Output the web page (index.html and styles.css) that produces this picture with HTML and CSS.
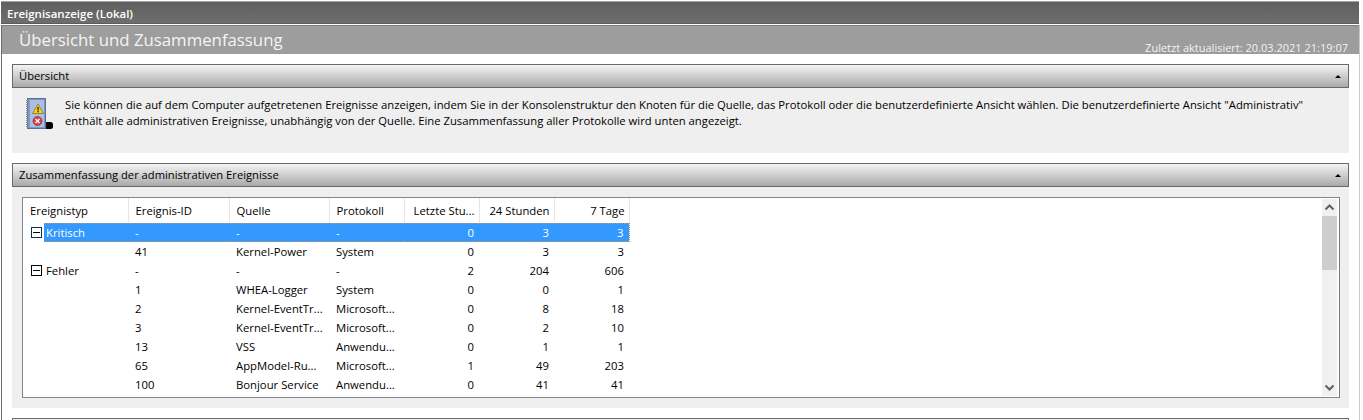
FILE: index.html
```html
<!DOCTYPE html>
<html lang="de">
<head>
<meta charset="utf-8">
<title>Ereignisanzeige</title>
<link rel="stylesheet" href="styles.css">
</head>
<body>
<div class="app">
  <div class="titlebar">Ereignisanzeige (Lokal)</div>
  <div class="window">
    <div class="pagehead">
      <h1 class="pagetitle">Übersicht und Zusammenfassung</h1>
      <span class="updated">Zuletzt aktualisiert: 20.03.2021 21:19:07</span>
    </div>
    <div class="content">
      <section class="section">
        <div class="sechead"><span>Übersicht</span><i class="caret"></i></div>
        <div class="overview">
          <svg class="bookicon" width="32" height="34" viewBox="0 0 32 34">
            <rect x="21" y="26" width="5" height="7" fill="#111"/>
            <rect x="23" y="26" width="6" height="7" rx="2.500" fill="#000"/>
            <rect x="3.500" y="2.500" width="18" height="30" fill="#7f98c2" stroke="#5d6f93"/>
            <rect x="6" y="4" width="14" height="27" fill="#a9c0e4"/>
            <path d="M3 4v28" stroke="#8c8c8c" stroke-dasharray="1 1" stroke-width="2"/>
            <path d="M14 8l5.500 9.500h-11z" fill="#f5cf1d" stroke="#8e7510" stroke-width=".8"/>
            <rect x="13.400" y="11" width="1.300" height="3.500" fill="#222"/>
            <rect x="13.400" y="15" width="1.300" height="1.300" fill="#222"/>
            <circle cx="13.500" cy="25" r="4.500" fill="#d9424a" stroke="#8d2a33" stroke-width=".7"/>
            <path d="M11.500 23l4 4M15.500 23l-4 4" stroke="#fff" stroke-width="1.300"/>
          </svg>
          <p class="overtext">Sie können die auf dem Computer aufgetretenen Ereignisse anzeigen, indem Sie in der Konsolenstruktur den Knoten für die Quelle, das Protokoll oder die benutzerdefinierte Ansicht wählen. Die benutzerdefinierte Ansicht "Administrativ"<br>enthält alle administrativen Ereignisse, unabhängig von der Quelle. Eine Zusammenfassung aller Protokolle wird unten angezeigt.</p>
        </div>
      </section>
      <section class="section">
        <div class="sechead"><span>Zusammenfassung der administrativen Ereignisse</span><i class="caret"></i></div>
        <div class="summary">
          <div class="listbox">
            <table class="grid">
              <colgroup>
                <col class="c1"><col class="c2"><col class="c3"><col class="c4"><col class="c5"><col class="c6"><col class="c7">
              </colgroup>
              <thead>
                <tr><th>Ereignistyp</th><th>Ereignis-ID</th><th>Quelle</th><th>Protokoll</th><th class="num">Letzte Stu...</th><th class="num">24 Stunden</th><th class="num">7 Tage</th></tr>
              </thead>
              <tbody>
                <tr class="selected"><td class="tree"><span class="box"></span><span class="label">Kritisch</span></td><td>-</td><td>-</td><td>-</td><td class="num">0</td><td class="num">3</td><td class="num last">3</td></tr>
                <tr><td></td><td>41</td><td>Kernel-Power</td><td>System</td><td class="num">0</td><td class="num">3</td><td class="num">3</td></tr>
                <tr><td class="tree"><span class="box"></span><span class="label">Fehler</span></td><td>-</td><td>-</td><td>-</td><td class="num">2</td><td class="num">204</td><td class="num">606</td></tr>
                <tr><td></td><td>1</td><td>WHEA-Logger</td><td>System</td><td class="num">0</td><td class="num">0</td><td class="num">1</td></tr>
                <tr><td></td><td>2</td><td>Kernel-EventTr...</td><td>Microsoft...</td><td class="num">0</td><td class="num">8</td><td class="num">18</td></tr>
                <tr><td></td><td>3</td><td>Kernel-EventTr...</td><td>Microsoft...</td><td class="num">0</td><td class="num">2</td><td class="num">10</td></tr>
                <tr><td></td><td>13</td><td>VSS</td><td>Anwendu...</td><td class="num">0</td><td class="num">1</td><td class="num">1</td></tr>
                <tr><td></td><td>65</td><td>AppModel-Ru...</td><td>Microsoft...</td><td class="num">1</td><td class="num">49</td><td class="num">203</td></tr>
                <tr><td></td><td>100</td><td>Bonjour Service</td><td>Anwendu...</td><td class="num">0</td><td class="num">41</td><td class="num">41</td></tr>
              </tbody>
            </table>
            <div class="scrollbar">
              <svg class="arrow" width="15" height="17" viewBox="0 0 15 17"><path d="M3.500 10.500l4-4 4 4" fill="none" stroke="#606060" stroke-width="2"/></svg>
              <div class="thumb"></div>
              <div class="track"></div>
              <svg class="arrow" width="15" height="17" viewBox="0 0 15 17"><path d="M3.500 6.500l4 4 4-4" fill="none" stroke="#606060" stroke-width="2"/></svg>
            </div>
          </div>
        </div>
      </section>
      <section class="section">
        <div class="sechead"></div>
      </section>
    </div>
  </div>
</div>
</body>
</html>
```
FILE: styles.css
```css
* { box-sizing: border-box; }
html, body { margin: 0; height: 420px; overflow: hidden; background: #fff; }
body { font-family: "Open Sans", "Noto Sans", sans-serif; font-size: 11.300px; color: #000; }
.app { width: 1363px; height: 420px; padding: 1px 0 0 1px; overflow: hidden; }
.titlebar {
  width: 1358px;
  height: 23px;
  background: linear-gradient(#5f5f5f, #6e6e6e);
  border-top: 1px solid #a0a0a0;
  border-bottom: 1px solid #5c5c5c;
  color: #fff;
  font-weight: 600;
  font-size: 11.500px;
  line-height: 23px;
  padding-left: 6px;
}
.window {
  margin-top: 1px;
  width: 1359px;
  height: 395px;
  overflow: hidden;
  border-left: 1px solid #6d6d6d;
  border-right: 1px solid #c9c9c9;
}
.pagehead {
  height: 29px;
  background: #9d9d9d;
  border-top: 1px solid #7d7d7d;
  display: flex;
  justify-content: space-between;
  color: #fff;
  padding: 0 11px 0 17px;
}
.pagetitle { margin: 0; font-size: 16.800px; font-weight: 400; line-height: 28px; color: #f4f4f4; }
.updated { font-size: 11px; line-height: 15px; padding-top: 14px; color: #f2f2f2; }
.content { padding: 10px 10px 0 10px; display: flex; flex-direction: column; gap: 10px; }
.section { width: 1337px; }
.sechead {
  height: 24px;
  border: 1px solid #696969;
  background: linear-gradient(#f4f4f4, #a9a9a9);
  display: flex;
  align-items: center;
  justify-content: space-between;
  padding: 0 6px 2px;
  font-size: 11.200px;
}
.caret {
  width: 0; height: 0;
  border-left: 3px solid transparent;
  border-right: 3px solid transparent;
  border-bottom: 3px solid #000;
  margin: 2px 1px 0 0;
}
.overview { height: 65px; background: #efefef; display: flex; padding: 8px 12px 0 12px; }
.bookicon { margin-right: 9px; flex: none; }
.overtext { margin: 1px 0 0; font-size: 11.270px; line-height: 16px; white-space: nowrap; color: #000; }
.summary { height: 221px; background: #efefef; padding: 10px; }
.listbox {
  height: 201px;
  width: 1318px;
  border: 1px solid #828790;
  border-right-color: #7a7a7a;
  background: #fff;
  display: flex;
  justify-content: space-between;
  overflow: hidden;
}
.grid { border-collapse: collapse; table-layout: fixed; width: 606px; height: 0; }
.c1 { width: 105px; } .c2 { width: 101px; } .c3 { width: 100px; } .c4 { width: 75px; }
.c5 { width: 75px; } .c6 { width: 75px; } .c7 { width: 75px; }
th {
  height: 25px;
  font-weight: 400;
  text-align: left;
  padding: 0 7px;
  border-right: 1px solid #e5e5e5;
  font-size: 11.300px;
  white-space: nowrap;
  overflow: hidden;
}
td { height: 19px; padding: 0 7px; font-size: 11.300px; line-height: 19px; white-space: nowrap; overflow: hidden; }
.num { text-align: right; padding-right: 5px; }
th.num { padding-right: 4px; }
.tree { padding: 0 0 0 8px; }
.box {
  display: inline-block;
  width: 11px; height: 11px;
  border: 1px solid #000;
  vertical-align: -1px;
  margin-right: 4px;
  background: linear-gradient(#000, #000) center / 7px 1px no-repeat #fff;
}
.selected td {
  color: #fff;
  background:
    repeating-linear-gradient(90deg, #c09560 0 1px, #3399ff 1px 2px) 0 0 / 100% 1px no-repeat,
    repeating-linear-gradient(90deg, #c09560 0 1px, #3399ff 1px 2px) 0 100% / 100% 1px no-repeat,
    #3399ff;
}
.selected .tree {
  background:
    repeating-linear-gradient(90deg, #c09560 0 1px, #3399ff 1px 2px) 21px 0 / 100% 1px no-repeat,
    repeating-linear-gradient(90deg, #c09560 0 1px, #3399ff 1px 2px) 21px 100% / 100% 1px no-repeat,
    linear-gradient(#3399ff, #3399ff) 21px 0 / 100% 100% no-repeat,
    #fff;
}
.selected .box { border-color: #10304f; }
.selected .last { border-right: 1px dotted #c09560; }
.scrollbar { width: 15px; margin: 1px 2px 0 0; height: 197px; background: #f0f0f0; display: flex; flex-direction: column; }
.arrow { display: block; flex: none; }
.thumb { height: 54px; background: #cdcdcd; flex: none; }
.track { flex: 1; }
```
